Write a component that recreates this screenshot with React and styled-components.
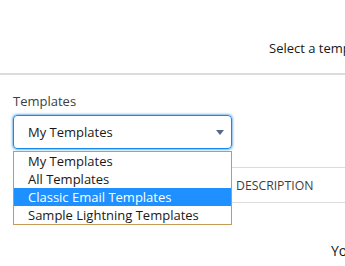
import React from "react";
import styled, { createGlobalStyle } from "styled-components";

const Global = createGlobalStyle`
  html, body {
    margin: 0;
    padding: 0;
    background: #ffffff;
  }
  body {
    width: 345px;
    height: 266px;
    overflow: hidden;
    font-family: "Open Sans", "Noto Sans", sans-serif;
    color: #181818;
  }
`;

const Modal = styled.div`
  width: 345px;
  height: 266px;
  overflow: hidden;
`;

const Header = styled.header`
  height: 75px;
  box-sizing: border-box;
  padding: 38px 0 0 269px;
  border-bottom: 2px solid #dcdcdc;
  font-size: 13px;
  line-height: 20px;
  color: #181818;
  white-space: nowrap;
  overflow: hidden;
`;

const Body = styled.div`
  padding: 17px 0 0 13px;
`;

const Label = styled.label`
  display: block;
  font-size: 13px;
  line-height: 18px;
  color: #3e3e3c;
`;

const Field = styled.div`
  position: relative;
  margin-top: 5px;
  width: 219px;
`;

const SelectBox = styled.div`
  height: 34px;
  box-sizing: border-box;
  display: flex;
  align-items: center;
  justify-content: space-between;
  padding: 0 7px 0 14px;
  border: 1px solid #1589ee;
  border-radius: 4px;
  box-shadow: 0 0 3px #0070d2;
  font-size: 13px;
  color: #181818;
`;

const Caret = styled.svg`
  width: 8px;
  height: 5px;
`;

const Options = styled.ul`
  position: absolute;
  top: 36px;
  left: 0;
  z-index: 2;
  width: 219px;
  box-sizing: border-box;
  margin: 0;
  padding: 0;
  list-style: none;
  background: #ffffff;
  border: 1px solid #c49a55;
`;

const Option = styled.li`
  height: 18px;
  line-height: 18px;
  padding-left: 14px;
  font-size: 13px;
  white-space: nowrap;
  background: ${(p) => (p.$active ? "#1e90ff" : "#ffffff")};
  color: ${(p) => (p.$active ? "#ffffff" : "#181818")};
`;

const Table = styled.div`
  margin-top: 18px;
  display: grid;
  grid-template-columns: 223px 1fr;
  border-top: 1px solid #dddbda;
  border-bottom: 1px solid #dddbda;
  height: 36px;
  box-sizing: border-box;
`;

const HeadCell = styled.div`
  display: flex;
  align-items: center;
  font-size: 12.25px;
  color: #3e3e3c;
  text-transform: uppercase;
  white-space: nowrap;
`;

const Empty = styled.div`
  padding: 38px 0 0 318px;
  font-size: 14px;
  line-height: 20px;
  color: #181818;
  white-space: nowrap;
  overflow: hidden;
`;

const options = [
  "My Templates",
  "All Templates",
  "Classic Email Templates",
  "Sample Lightning Templates",
];

export default function App() {
  return (
    <Modal>
      <Global />
      <Header>Select a template</Header>
      <Body>
        <Label>Templates</Label>
        <Field>
          <SelectBox>
            <span>My Templates</span>
            <Caret viewBox="0 0 8 5">
              <path d="M0 0h8L4 5z" fill="#54698d" />
            </Caret>
          </SelectBox>
          <Options>
            {options.map((o, i) => (
              <Option key={o} $active={i === 2}>
                {o}
              </Option>
            ))}
          </Options>
        </Field>
        <Table>
          <HeadCell />
          <HeadCell>Description</HeadCell>
        </Table>
        <Empty>You have no templates</Empty>
      </Body>
    </Modal>
  );
}
